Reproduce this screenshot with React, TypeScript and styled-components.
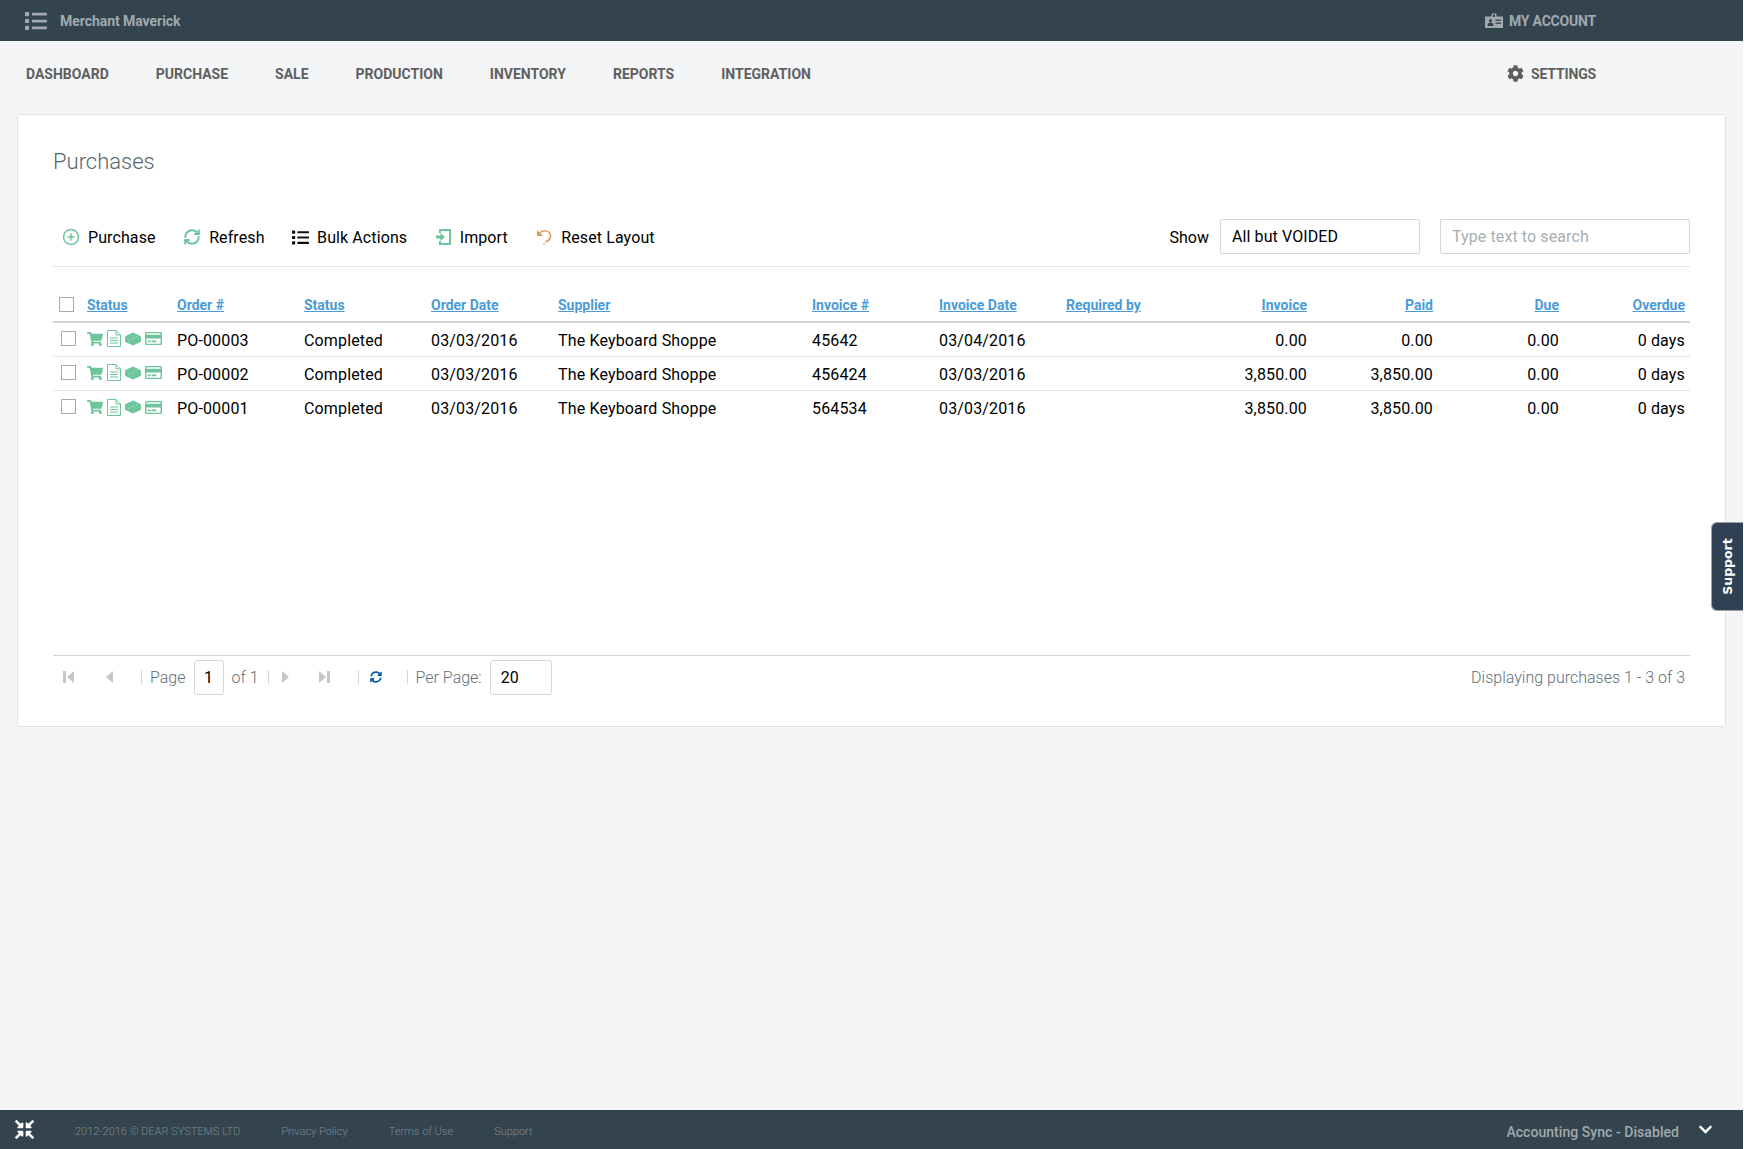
import styled, { createGlobalStyle } from "styled-components";
import { FaList, FaCog, FaShoppingCart, FaRegCreditCard, FaSyncAlt, FaCompressArrowsAlt, FaChevronDown } from "react-icons/fa";
import { CirclePlus, RefreshCw } from "lucide-react";

const GlobalStyle = createGlobalStyle`
  html, body {
    margin: 0;
    padding: 0;
    background: #fff;
  }
  * {
    box-sizing: border-box;
  }
  body {
    font-family: Roboto, "Liberation Sans", sans-serif;
    color: #000;
  }
`;

const StPage = styled.div`
  display: flex;
  flex-direction: column;
  width: 1743px;
  height: 1149px;
  background: #f4f5f7;
`;

const StTopBar = styled.header`
  display: flex;
  align-items: center;
  height: 41px;
  padding: 0 147px 0 25px;
  background: #33444f;
  color: #a2a9ae;
`;

const StBrand = styled.span`
  margin-left: 13px;
  font-size: 14px;
  font-weight: 700;
  letter-spacing: -0.05px;
`;

const StAccount = styled.span`
  display: flex;
  align-items: center;
  gap: 6px;
  margin-left: auto;
  font-size: 14px;
  font-weight: 700;
  letter-spacing: -0.2px;
`;

const StNav = styled.nav`
  display: flex;
  align-items: center;
  gap: 47px;
  height: 73px;
  padding: 0 147px 8px 26px;
`;

const StNavItem = styled.span<{ $right?: boolean }>`
  display: flex;
  align-items: center;
  gap: 7px;
  margin-left: ${({ $right }) => ($right ? "auto" : "0")};
  color: #5f5f5f;
  font-size: 14px;
  font-weight: 700;
  letter-spacing: ${({ $right }) => ($right ? "-0.15px" : "0")};
`;

const StCard = styled.main`
  width: 1709px;
  height: 613px;
  margin-left: 17px;
  padding: 0 35px;
  background: #fff;
  border: 1px solid #e2e4e7;
  border-radius: 3px;
`;

const StTitle = styled.h1`
  margin: 0;
  padding-top: 32px;
  height: 101px;
  color: #58666e;
  font-size: 22px;
  font-weight: 300;
  line-height: 30px;
`;

const StToolbar = styled.div`
  display: flex;
  align-items: center;
  height: 51px;
  padding: 0 0 8px 9px;
  border-bottom: 1px solid #e2e4e7;
`;

const StAction = styled.span`
  display: flex;
  align-items: center;
  gap: 8px;
  margin-right: 27.5px;
  font-size: 16px;
  letter-spacing: 0.1px;
  white-space: nowrap;

  svg {
    flex: none;
  }
`;

const StShow = styled.span`
  margin-left: auto;
  margin-right: 11px;
  font-size: 16px;
`;

const StField = styled.div<{ $width: number; $muted?: boolean }>`
  display: flex;
  align-items: center;
  width: ${({ $width }) => $width}px;
  height: 35px;
  margin: 0 0 2px ${({ $muted }) => ($muted ? "20px" : "0")};
  padding-left: 11px;
  background: #fff;
  border: 1px solid #d4d6d8;
  border-radius: 2px;
  color: ${({ $muted }) => ($muted ? "#a9aeb2" : "#000")};
  font-size: 16px;
  letter-spacing: 0.1px;
`;

const StRow = styled.div<{ $head?: boolean }>`
  display: grid;
  grid-template-columns: 34px 90px 127px 127px 127px 254px 127px 127px 120px 126px 126px 126px 126px;
  align-items: center;
  height: ${({ $head }) => ($head ? "56px" : "34px")};
  padding-top: ${({ $head }) => ($head ? "22px" : "1px")};
  border-bottom: ${({ $head }) => ($head ? "2px solid #d0d2d4" : "1px solid #e2e4e7")};
  font-size: 16px;
  letter-spacing: 0.15px;

  &:last-child {
    border-bottom: none;
  }
`;

const StHeadCell = styled.span<{ $end?: boolean }>`
  padding-right: 5px;
  color: #4a9bd8;
  font-size: 14px;
  font-weight: 700;
  letter-spacing: 0;
  text-decoration: underline;
  text-align: ${({ $end }) => ($end ? "right" : "left")};
`;

const StCell = styled.span<{ $end?: boolean }>`
  padding-right: 5px;
  text-align: ${({ $end }) => ($end ? "right" : "left")};
  white-space: nowrap;
`;

const StCheck = styled.span<{ $indent: number; $lift: number }>`
  display: block;
  width: 15px;
  height: 15px;
  margin-left: ${({ $indent }) => $indent}px;
  margin-top: ${({ $lift }) => -$lift}px;
  background: #fff;
  border: 1px solid #a9a9a9;
`;

const StStatusIcons = styled.span`
  display: flex;
  align-items: center;
  gap: 4px;
  margin-top: -3px;
  color: #6cc59b;
`;

const StTableArea = styled.div`
  height: 388px;
`;

const StPager = styled.div`
  display: flex;
  align-items: center;
  height: 43px;
  border-top: 1px solid #d0d2d4;
  color: #5e6f7a;
  font-size: 16px;
  font-weight: 300;
`;

const StPagerIcon = styled.span<{ $width: number }>`
  display: flex;
  justify-content: center;
  width: ${({ $width }) => $width}px;
  flex: none;
`;

const StSep = styled.span<{ $left: number; $right: number }>`
  width: 1px;
  height: 14px;
  margin: 0 ${({ $right }) => $right}px 0 ${({ $left }) => $left}px;
  background: #d3d5d7;
`;

const StPagerInput = styled.span<{ $width: number }>`
  display: flex;
  align-items: center;
  justify-content: ${({ $width }) => ($width < 40 ? "center" : "flex-start")};
  width: ${({ $width }) => $width}px;
  height: 35px;
  margin: 0 8px;
  padding-left: ${({ $width }) => ($width < 40 ? "0" : "10px")};
  border: 1px solid #d4d6d8;
  border-radius: 3px;
  color: #000;
  font-weight: 400;
`;

const StDisplaying = styled.span`
  margin-left: auto;
  margin-right: 5px;
`;

const StFooter = styled.footer`
  display: flex;
  align-items: center;
  height: 39px;
  margin-top: auto;
  padding: 0 30px 0 15px;
  background: #33444f;
  color: #7c8992;
  font-size: 11px;
  font-weight: 300;
`;

const StFooterLink = styled.span`
  margin-left: 41px;
  padding-top: 3px;
`;

const StSync = styled.span`
  margin-left: auto;
  margin-right: 19px;
  padding-top: 4px;
  color: #a2a9ae;
  font-size: 14px;
  font-weight: 500;
  letter-spacing: 0.05px;
`;

const StSupport = styled.aside`
  position: fixed;
  top: 522px;
  left: 1711px;
  display: flex;
  align-items: center;
  justify-content: center;
  width: 32px;
  height: 89px;
  background: #2f4153;
  border: 1px solid #9aa2a8;
  border-right: none;
  border-radius: 6px 0 0 6px;
  color: #fff;
  font-family: "DejaVu Sans", sans-serif;
  font-size: 12.5px;
  font-weight: 700;
`;

const StSupportText = styled.span`
  transform: rotate(-90deg);
`;

const StTriangle = styled.svg<{ $flip?: boolean }>`
  fill: #c3c7ca;
  transform: ${({ $flip }) => ($flip ? "scaleX(-1)" : "none")};
`;

const BadgeIcon = () => (
  <svg width="18" height="15" viewBox="0 0 18 15" fill="#a2a9ae">
    <path d="M0 3.5h6.5V1.5a1 1 0 0 1 1-1h3a1 1 0 0 1 1 1v2H18V15H0z" />
    <rect x="8" y="1.5" width="2" height="2.5" fill="#33444f" />
    <circle cx="5.5" cy="7.5" r="1.6" fill="#33444f" />
    <path d="M2.500 13c0-2.500 1.200-3.400 3-3.400s3 .9 3 3.400z" fill="#33444f" />
    <rect x="10.500" y="6.500" width="5.500" height="1.300" fill="#33444f" />
    <rect x="10.500" y="9.500" width="5.500" height="1.300" fill="#33444f" />
  </svg>
);

const ImportIcon = () => (
  <svg width="17" height="18" viewBox="0 0 17 18" fill="none" stroke="#6cc59b" strokeWidth="2">
    <path d="M5 5V2h10v14H5v-3" />
    <path d="M1 7.500h4.500V5l4.500 4-4.500 4v-2.500H1z" fill="#6cc59b" strokeWidth="0" />
  </svg>
);

const ResetIcon = () => (
  <svg width="18" height="18" viewBox="0 0 18 18" fill="none" stroke="#d9985f">
    <path d="M2 2v6h6z" fill="#d9985f" stroke="none" />
    <path d="M4 5.500C7.500 1.500 14.500 2 15.500 7c.5 3-1.500 5.500-5 7" strokeWidth="1.500" />
    <circle cx="9" cy="16" r="0.8" fill="#d9985f" stroke="none" />
  </svg>
);

const DocIcon = () => (
  <svg width="14" height="17" viewBox="0 0 14 17" fill="none" stroke="#6cc59b" strokeWidth="1">
    <path d="M.5.5h8.500l4.500 4.500v11.500H.5z" />
    <path d="M9 .5v4.500h4.500M3 8h8M3 10.500h8M3 13h8" />
  </svg>
);

const BoxIcon = () => (
  <svg width="16" height="14" viewBox="0 0 16 14" fill="#6cc59b">
    <path d="M8 .5l7 3.200q1 .5 1 1.500v3.600q0 1-1 1.500l-7 3.200-7-3.200q-1-.5-1-1.500V5.200q0-1 1-1.500z" />
    <path d="M3.500 8.500l2-1M7 6.800l2-1M10.500 5l2-1" stroke="#b8e4cf" strokeWidth="0.8" />
  </svg>
);

const TriangleIcon = ({ flip, bar }: { flip?: boolean; bar?: boolean }) => (
  <StTriangle $flip={flip} width={bar ? 11 : 7} height="12" viewBox={bar ? "0 0 11 12" : "0 0 7 12"}>
    {bar && <rect x="0" y="0" width="3" height="12" />}
    <path d={bar ? "M11 0v12L4 6z" : "M7 0v12L0 6z"} />
  </StTriangle>
);

const rows = [
  { order: "PO-00003", invoice: "45642", invoiceDate: "03/04/2016", total: "0.00", paid: "0.00" },
  { order: "PO-00002", invoice: "456424", invoiceDate: "03/03/2016", total: "3,850.00", paid: "3,850.00" },
  { order: "PO-00001", invoice: "564534", invoiceDate: "03/03/2016", total: "3,850.00", paid: "3,850.00" },
];

const App = () => {
  return (
    <StPage>
      <GlobalStyle />
      <StTopBar>
        <FaList size={22} />
        <StBrand>Merchant Maverick</StBrand>
        <StAccount>
          <BadgeIcon />
          MY ACCOUNT
        </StAccount>
      </StTopBar>
      <StNav>
        <StNavItem>DASHBOARD</StNavItem>
        <StNavItem>PURCHASE</StNavItem>
        <StNavItem>SALE</StNavItem>
        <StNavItem>PRODUCTION</StNavItem>
        <StNavItem>INVENTORY</StNavItem>
        <StNavItem>REPORTS</StNavItem>
        <StNavItem>INTEGRATION</StNavItem>
        <StNavItem $right>
          <FaCog size={17} />
          SETTINGS
        </StNavItem>
      </StNav>
      <StCard>
        <StTitle>Purchases</StTitle>
        <StToolbar>
          <StAction>
            <CirclePlus size={18} color="#6cc59b" />
            Purchase
          </StAction>
          <StAction>
            <RefreshCw size={18} color="#6cc59b" strokeWidth={2.6} />
            Refresh
          </StAction>
          <StAction>
            <FaList size={17} color="#111" />
            Bulk Actions
          </StAction>
          <StAction>
            <ImportIcon />
            Import
          </StAction>
          <StAction>
            <ResetIcon />
            Reset Layout
          </StAction>
          <StShow>Show</StShow>
          <StField $width={200}>All but VOIDED</StField>
          <StField $width={250} $muted>
            Type text to search
          </StField>
        </StToolbar>
        <StTableArea>
          <StRow $head>
            <StCheck $indent={6} $lift={2} />
            <StHeadCell>Status</StHeadCell>
            <StHeadCell>Order #</StHeadCell>
            <StHeadCell>Status</StHeadCell>
            <StHeadCell>Order Date</StHeadCell>
            <StHeadCell>Supplier</StHeadCell>
            <StHeadCell>Invoice #</StHeadCell>
            <StHeadCell>Invoice Date</StHeadCell>
            <StHeadCell>Required by</StHeadCell>
            <StHeadCell $end>Invoice</StHeadCell>
            <StHeadCell $end>Paid</StHeadCell>
            <StHeadCell $end>Due</StHeadCell>
            <StHeadCell $end>Overdue</StHeadCell>
          </StRow>
          {rows.map((row) => (
            <StRow key={row.order}>
              <StCheck $indent={8} $lift={4} />
              <StStatusIcons>
                <FaShoppingCart size={16} />
                <DocIcon />
                <BoxIcon />
                <FaRegCreditCard size={17} />
              </StStatusIcons>
              <StCell>{row.order}</StCell>
              <StCell>Completed</StCell>
              <StCell>03/03/2016</StCell>
              <StCell>The Keyboard Shoppe</StCell>
              <StCell>{row.invoice}</StCell>
              <StCell>{row.invoiceDate}</StCell>
              <StCell />
              <StCell $end>{row.total}</StCell>
              <StCell $end>{row.paid}</StCell>
              <StCell $end>0.00</StCell>
              <StCell $end>0 days</StCell>
            </StRow>
          ))}
        </StTableArea>
        <StPager>
          <StPagerIcon $width={30}>
            <TriangleIcon bar />
          </StPagerIcon>
          <StPagerIcon $width={52}>
            <TriangleIcon />
          </StPagerIcon>
          <StSep $left={6} $right={8} />
          <span>Page</span>
          <StPagerInput $width={30}>1</StPagerInput>
          <span>of 1</span>
          <StSep $left={9} $right={10} />
          <StPagerIcon $width={13}>
            <TriangleIcon flip />
          </StPagerIcon>
          <StPagerIcon $width={66}>
            <TriangleIcon flip bar />
          </StPagerIcon>
          <StSep $left={0} $right={1} />
          <StPagerIcon $width={32}>
            <FaSyncAlt size={12} color="#0b5fa5" />
          </StPagerIcon>
          <StSep $left={15} $right={8} />
          <span>Per Page:</span>
          <StPagerInput $width={62}>20</StPagerInput>
          <StDisplaying>Displaying purchases 1 - 3 of 3</StDisplaying>
        </StPager>
      </StCard>
      <StFooter>
        <FaCompressArrowsAlt size={19} color="#fff" />
        <StFooterLink>2012-2016 © DEAR SYSTEMS LTD</StFooterLink>
        <StFooterLink>Privacy Policy</StFooterLink>
        <StFooterLink>Terms of Use</StFooterLink>
        <StFooterLink>Support</StFooterLink>
        <StSync>Accounting Sync - Disabled</StSync>
        <FaChevronDown size={15} color="#fff" />
      </StFooter>
      <StSupport>
        <StSupportText>Support</StSupportText>
      </StSupport>
    </StPage>
  );
};

export default App;
